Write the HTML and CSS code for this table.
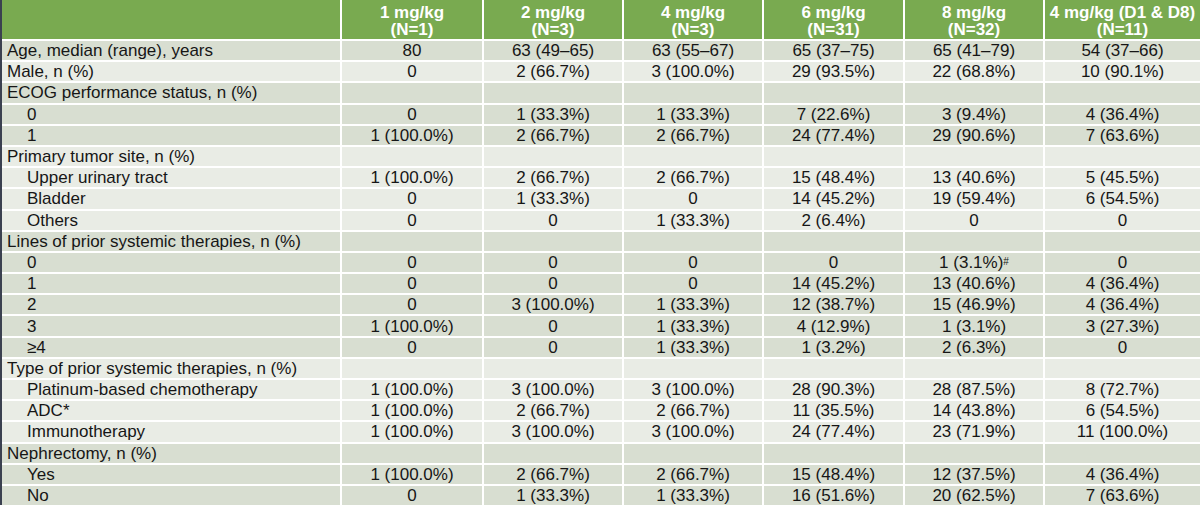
FILE: index.html
```html
<!DOCTYPE html>
<html>
<head>
<meta charset="utf-8">
<link rel="stylesheet" href="styles.css">
</head>
<body>
<div class="table">
  <div class="row head">
    <div class="cell label"></div>
    <div class="cell">1 mg/kg<br>(N=1)</div>
    <div class="cell">2 mg/kg<br>(N=3)</div>
    <div class="cell">4 mg/kg<br>(N=3)</div>
    <div class="cell">6 mg/kg<br>(N=31)</div>
    <div class="cell">8 mg/kg<br>(N=32)</div>
    <div class="cell">4 mg/kg (D1 &amp; D8)<br>(N=11)</div>
  </div>
  <div class="row dark">
    <div class="cell label">Age, median (range), years</div>
    <div class="cell">80</div><div class="cell">63 (49–65)</div><div class="cell">63 (55–67)</div><div class="cell">65 (37–75)</div><div class="cell">65 (41–79)</div><div class="cell">54 (37–66)</div>
  </div>
  <div class="row light">
    <div class="cell label">Male, n (%)</div>
    <div class="cell">0</div><div class="cell">2 (66.7%)</div><div class="cell">3 (100.0%)</div><div class="cell">29 (93.5%)</div><div class="cell">22 (68.8%)</div><div class="cell">10 (90.1%)</div>
  </div>
  <div class="row dark">
    <div class="cell label">ECOG performance status, n (%)</div>
    <div class="cell"></div><div class="cell"></div><div class="cell"></div><div class="cell"></div><div class="cell"></div><div class="cell"></div>
  </div>
  <div class="row dark">
    <div class="cell label sub">0</div>
    <div class="cell">0</div><div class="cell">1 (33.3%)</div><div class="cell">1 (33.3%)</div><div class="cell">7 (22.6%)</div><div class="cell">3 (9.4%)</div><div class="cell">4 (36.4%)</div>
  </div>
  <div class="row dark">
    <div class="cell label sub">1</div>
    <div class="cell">1 (100.0%)</div><div class="cell">2 (66.7%)</div><div class="cell">2 (66.7%)</div><div class="cell">24 (77.4%)</div><div class="cell">29 (90.6%)</div><div class="cell">7 (63.6%)</div>
  </div>
  <div class="row light">
    <div class="cell label">Primary tumor site, n (%)</div>
    <div class="cell"></div><div class="cell"></div><div class="cell"></div><div class="cell"></div><div class="cell"></div><div class="cell"></div>
  </div>
  <div class="row light">
    <div class="cell label sub">Upper urinary tract</div>
    <div class="cell">1 (100.0%)</div><div class="cell">2 (66.7%)</div><div class="cell">2 (66.7%)</div><div class="cell">15 (48.4%)</div><div class="cell">13 (40.6%)</div><div class="cell">5 (45.5%)</div>
  </div>
  <div class="row light">
    <div class="cell label sub">Bladder</div>
    <div class="cell">0</div><div class="cell">1 (33.3%)</div><div class="cell">0</div><div class="cell">14 (45.2%)</div><div class="cell">19 (59.4%)</div><div class="cell">6 (54.5%)</div>
  </div>
  <div class="row light">
    <div class="cell label sub">Others</div>
    <div class="cell">0</div><div class="cell">0</div><div class="cell">1 (33.3%)</div><div class="cell">2 (6.4%)</div><div class="cell">0</div><div class="cell">0</div>
  </div>
  <div class="row dark">
    <div class="cell label">Lines of prior systemic therapies, n (%)</div>
    <div class="cell"></div><div class="cell"></div><div class="cell"></div><div class="cell"></div><div class="cell"></div><div class="cell"></div>
  </div>
  <div class="row dark">
    <div class="cell label sub">0</div>
    <div class="cell">0</div><div class="cell">0</div><div class="cell">0</div><div class="cell">0</div><div class="cell">1 (3.1%)<sup>#</sup></div><div class="cell">0</div>
  </div>
  <div class="row dark">
    <div class="cell label sub">1</div>
    <div class="cell">0</div><div class="cell">0</div><div class="cell">0</div><div class="cell">14 (45.2%)</div><div class="cell">13 (40.6%)</div><div class="cell">4 (36.4%)</div>
  </div>
  <div class="row dark">
    <div class="cell label sub">2</div>
    <div class="cell">0</div><div class="cell">3 (100.0%)</div><div class="cell">1 (33.3%)</div><div class="cell">12 (38.7%)</div><div class="cell">15 (46.9%)</div><div class="cell">4 (36.4%)</div>
  </div>
  <div class="row dark">
    <div class="cell label sub">3</div>
    <div class="cell">1 (100.0%)</div><div class="cell">0</div><div class="cell">1 (33.3%)</div><div class="cell">4 (12.9%)</div><div class="cell">1 (3.1%)</div><div class="cell">3 (27.3%)</div>
  </div>
  <div class="row dark">
    <div class="cell label sub">≥4</div>
    <div class="cell">0</div><div class="cell">0</div><div class="cell">1 (33.3%)</div><div class="cell">1 (3.2%)</div><div class="cell">2 (6.3%)</div><div class="cell">0</div>
  </div>
  <div class="row light">
    <div class="cell label">Type of prior systemic therapies, n (%)</div>
    <div class="cell"></div><div class="cell"></div><div class="cell"></div><div class="cell"></div><div class="cell"></div><div class="cell"></div>
  </div>
  <div class="row light">
    <div class="cell label sub">Platinum-based chemotherapy</div>
    <div class="cell">1 (100.0%)</div><div class="cell">3 (100.0%)</div><div class="cell">3 (100.0%)</div><div class="cell">28 (90.3%)</div><div class="cell">28 (87.5%)</div><div class="cell">8 (72.7%)</div>
  </div>
  <div class="row light">
    <div class="cell label sub">ADC*</div>
    <div class="cell">1 (100.0%)</div><div class="cell">2 (66.7%)</div><div class="cell">2 (66.7%)</div><div class="cell">11 (35.5%)</div><div class="cell">14 (43.8%)</div><div class="cell">6 (54.5%)</div>
  </div>
  <div class="row light">
    <div class="cell label sub">Immunotherapy</div>
    <div class="cell">1 (100.0%)</div><div class="cell">3 (100.0%)</div><div class="cell">3 (100.0%)</div><div class="cell">24 (77.4%)</div><div class="cell">23 (71.9%)</div><div class="cell">11 (100.0%)</div>
  </div>
  <div class="row dark">
    <div class="cell label">Nephrectomy, n (%)</div>
    <div class="cell"></div><div class="cell"></div><div class="cell"></div><div class="cell"></div><div class="cell"></div><div class="cell"></div>
  </div>
  <div class="row dark">
    <div class="cell label sub">Yes</div>
    <div class="cell">1 (100.0%)</div><div class="cell">2 (66.7%)</div><div class="cell">2 (66.7%)</div><div class="cell">15 (48.4%)</div><div class="cell">12 (37.5%)</div><div class="cell">4 (36.4%)</div>
  </div>
  <div class="row dark">
    <div class="cell label sub">No</div>
    <div class="cell">0</div><div class="cell">1 (33.3%)</div><div class="cell">1 (33.3%)</div><div class="cell">16 (51.6%)</div><div class="cell">20 (62.5%)</div><div class="cell">7 (63.6%)</div>
  </div>
</div>
</body>
</html>
```
FILE: styles.css
```css
html, body {
  margin: 0;
  padding: 0;
  background: #ffffff;
}
body {
  font-family: "Liberation Sans", Arial, sans-serif;
  font-size: 17px;
  color: #161616;
  width: 1200px;
  height: 505px;
  overflow: hidden;
}
.table {
  display: flex;
  flex-direction: column;
  gap: 2px;
  background: #ffffff;
  border-left: 2px solid #3b4150;
}
.row {
  display: grid;
  grid-template-columns: 338px 140px 138px 138px 139px 138px 1fr;
  column-gap: 2px;
  height: 19.2px;
}
.cell {
  display: flex;
  align-items: center;
  justify-content: center;
  white-space: nowrap;
  line-height: 19px;
}
.cell.label {
  justify-content: flex-start;
  padding-left: 5px;
}
.cell.sub {
  padding-left: 25px;
}
.row.head {
  height: 39px;
}
.row.head .cell {
  background: #79aa50;
  color: #ffffff;
  font-weight: bold;
  text-align: center;
  line-height: 17px;
  padding-top: 3px;
}
.row.dark .cell {
  background: #d8ded1;
}
.row.light .cell {
  background: #e9ece5;
}
sup {
  font-size: 10px;
  line-height: 0;
  vertical-align: 7px;
}
```
